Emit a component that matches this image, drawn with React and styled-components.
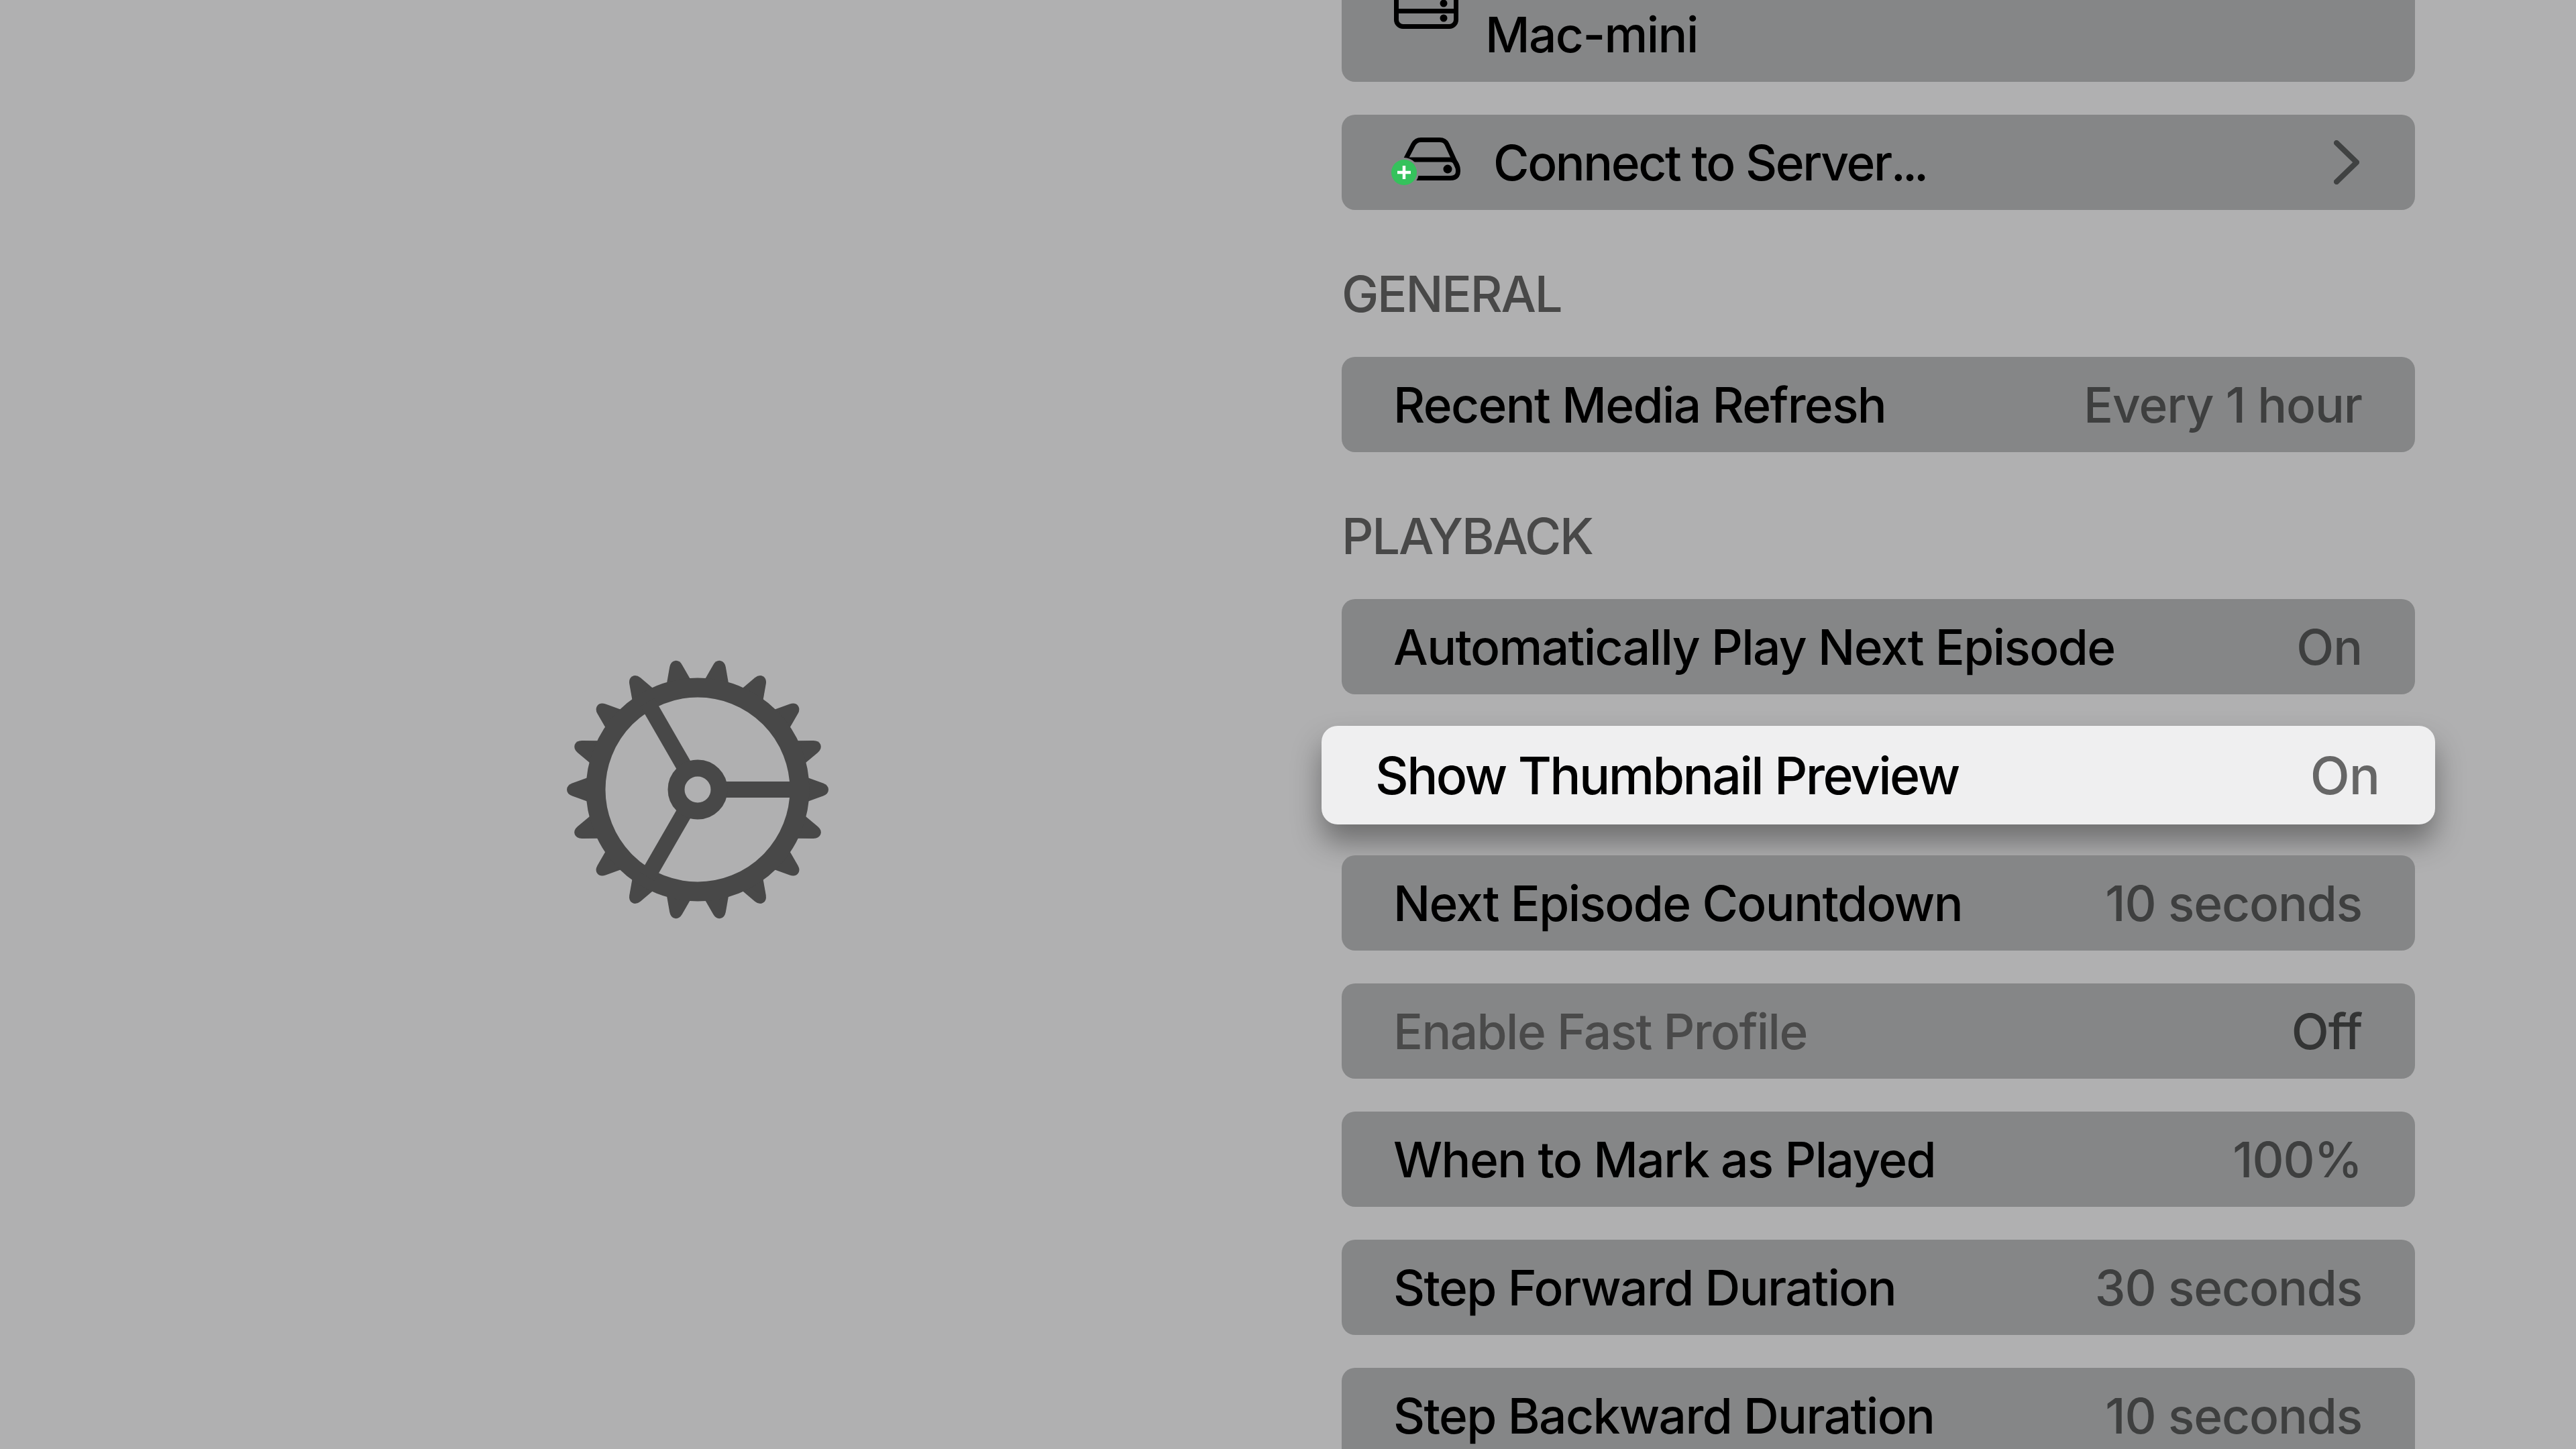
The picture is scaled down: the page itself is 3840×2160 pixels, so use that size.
import React from "react";
import styled, { createGlobalStyle } from "styled-components";

const GlobalStyle = createGlobalStyle`
  html, body {
    margin: 0;
    padding: 0;
    background: #b0b0b1;
    font-family: Inter, "Liberation Sans", sans-serif;
  }
`;

const Screen = styled.div`
  display: flex;
  width: 3840px;
  height: 2160px;
  overflow: hidden;
  background: #b0b0b1;
`;

const GearPanel = styled.div`
  flex: none;
  display: flex;
  align-items: center;
  justify-content: center;
  width: 2000px;
  height: 2160px;
  padding: 194px 0 0 80px;
  box-sizing: border-box;
`;

const List = styled.div`
  flex: none;
  display: flex;
  flex-direction: column;
  width: 1600px;
  margin-top: -78px;
`;

const Row = styled.div`
  flex: none;
  display: flex;
  align-items: center;
  justify-content: space-between;
  box-sizing: border-box;
  height: 142px;
  margin-bottom: 49px;
  padding: 0 79px 0 77px;
  border-radius: 20px;
  background: #858687;
  font-size: 73px;
  font-weight: 500;
  letter-spacing: -1.6px;
  color: ${(p) => (p.$dim ? "#4a4a4a" : "#000")};
`;

const FocusedRow = styled(Row)`
  height: 147px;
  margin: -2px -30px 46px;
  padding: 0 83px 0 80px;
  border-radius: 24px;
  background: #efeff0;
  box-shadow: 0 26px 44px rgba(0, 0, 0, 0.38);
  font-size: 77px;
  font-weight: 500;
  letter-spacing: -2.6px;
`;

const ServerRow = styled(Row)`
  height: 200px;
  align-items: flex-start;
  justify-content: flex-start;
  gap: 40px;
  padding-left: 78px;
`;

const ConnectRow = styled(Row)`
  justify-content: flex-start;
  padding: 0 83px 0 70px;
`;

const ServerName = styled.span`
  margin-top: 86px;
  line-height: 88px;
`;

const ConnectLabel = styled.span`
  flex: 1;
  margin-left: 36px;
  letter-spacing: -2.4px;
`;

const Ellipsis = styled.span`
  letter-spacing: -5px;
`;

const Value = styled.span`
  letter-spacing: -1.1px;
  color: ${(p) => (p.$strong ? "#333434" : "#3e3f3f")};
`;

const FocusedValue = styled.span`
  font-weight: 500;
  letter-spacing: -1px;
  color: #666;
`;

const SectionLabel = styled.div`
  flex: none;
  display: flex;
  align-items: center;
  box-sizing: border-box;
  height: 170px;
  margin-top: -49px;
  margin-bottom: 49px;
  padding-top: 80px;
  font-size: 74px;
  font-weight: 500;
  letter-spacing: -2.2px;
  color: #484848;
`;

const ServerGlyph = styled.svg`
  flex: none;
  margin-top: 45px;
`;

const ConnectGlyph = styled.svg`
  flex: none;
  margin-top: 6px;
`;

function GearIcon() {
  const teeth = Array.from({ length: 18 }, (_, i) => i * 20);
  return (
    <svg width="400" height="400" viewBox="-200 -200 400 400" fill="#484848">
      {teeth.map((deg) => (
        <path
          key={deg}
          transform={`rotate(${deg})`}
          d="M158 -20 L187 -9.5 Q195 -6.5 195 0 Q195 6.5 187 9.5 L158 20 Z"
        />
      ))}
      <circle r="152" fill="none" stroke="#484848" strokeWidth="29" />
      {[0, 120, 240].map((deg) => (
        <rect key={deg} transform={`rotate(${deg})`} x="30" y="-12" width="120" height="24" />
      ))}
      <circle r="32" fill="none" stroke="#484848" strokeWidth="25" />
    </svg>
  );
}

function ServerIcon() {
  return (
    <ServerGlyph width="96" height="76" viewBox="0 0 96 76" fill="none" stroke="#000" strokeWidth="7">
      <rect x="3.5" y="-20" width="89" height="92.5" rx="10" />
      <path d="M4 49.5 H92" />
      <circle cx="74" cy="38" r="5.5" fill="#000" stroke="none" />
      <circle cx="74" cy="60" r="5.5" fill="#000" stroke="none" />
    </ServerGlyph>
  );
}

function ConnectIcon() {
  return (
    <ConnectGlyph width="120" height="90" viewBox="0 0 120 90" fill="none" stroke="#000" strokeWidth="7">
      <path d="M24 40 L37 15 Q41 8.5 48 8.5 H76 Q84 8.5 87 15 L103 50 Q106 65.5 92 65.5 H30" />
      <path d="M28 38 H92 Q100 38 103 50" />
      <circle cx="88" cy="52" r="6.5" fill="#000" stroke="none" />
      <circle cx="23" cy="57" r="22" fill="#858687" stroke="none" />
      <circle cx="23" cy="57" r="19" fill="#35c25c" stroke="none" />
      <path d="M23 47 V67 M13 57 H33" stroke="#fff" strokeWidth="4.5" />
    </ConnectGlyph>
  );
}

function Chevron() {
  return (
    <svg width="38" height="66" viewBox="0 0 38 66" fill="none" stroke="#404242" strokeWidth="8" strokeLinecap="round" strokeLinejoin="round">
      <path d="M4 4 L34 33 L4 62" />
    </svg>
  );
}

export default function App() {
  return (
    <Screen>
      <GlobalStyle />
      <GearPanel>
        <GearIcon />
      </GearPanel>
      <List>
        <ServerRow>
          <ServerIcon />
          <ServerName>Mac-mini</ServerName>
        </ServerRow>
        <ConnectRow>
          <ConnectIcon />
          <ConnectLabel>
            Connect to Server<Ellipsis>...</Ellipsis>
          </ConnectLabel>
          <Chevron />
        </ConnectRow>
        <SectionLabel>GENERAL</SectionLabel>
        <Row>
          Recent Media Refresh
          <Value>Every 1 hour</Value>
        </Row>
        <SectionLabel>PLAYBACK</SectionLabel>
        <Row>
          Automatically Play Next Episode
          <Value>On</Value>
        </Row>
        <FocusedRow>
          Show Thumbnail Preview
          <FocusedValue>On</FocusedValue>
        </FocusedRow>
        <Row>
          Next Episode Countdown
          <Value>10 seconds</Value>
        </Row>
        <Row $dim>
          Enable Fast Profile
          <Value $strong>Off</Value>
        </Row>
        <Row>
          When to Mark as Played
          <Value>100%</Value>
        </Row>
        <Row>
          Step Forward Duration
          <Value>30 seconds</Value>
        </Row>
        <Row>
          Step Backward Duration
          <Value>10 seconds</Value>
        </Row>
      </List>
    </Screen>
  );
}
